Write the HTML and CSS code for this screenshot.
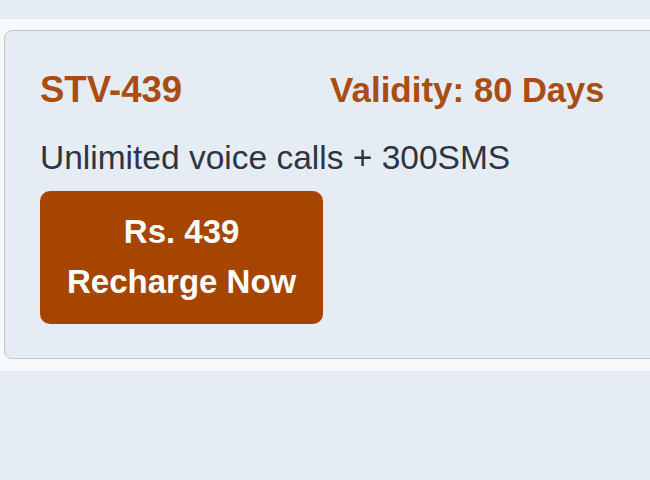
FILE: index.html
```html
<!DOCTYPE html>
<html lang="en">
<head>
  <meta charset="UTF-8">
  <title>STV Plans</title>
  <link rel="stylesheet" href="styles.css">
</head>
<body>

<div class="plan-list">
  <div class="plan-card">
    <div class="plan-head">
      <span class="plan-name">STV-439</span>
      <span class="plan-validity">Validity: <span class="days">80 Days</span></span>
    </div>
    <p class="plan-desc">Unlimited voice calls + 300SMS</p>
    <button class="recharge-btn">Rs. 439<br>Recharge Now</button>
  </div>
</div>

</body>
</html>
```

FILE: styles.css
```css
* { margin: 0; padding: 0; box-sizing: border-box; }
body {
  font-family: 'Liberation Sans', Arial, sans-serif;
  background: #e6ecf4;
  overflow: hidden;
  min-height: 100vh;
  padding-top: 19px;
}
.plan-list {
  background: #f5f9fc;
  width: 760px;
  padding: 11px 0 12px 4px;
}
.plan-card {
  background: #e6ecf4;
  border: 1px solid #c3c7cc;
  border-radius: 8px;
  padding: 38px 36px 34px 35px;
}
.plan-head {
  display: flex;
  align-items: baseline;
  gap: 148px;
  color: #aa4d12;
  font-weight: 700;
}
.plan-name { font-size: 36.5px; }
.plan-validity { font-size: 35px; }
.plan-validity .days { font-size: 34.5px; }
.plan-desc {
  margin-top: 28px;
  font-size: 33.5px;
  color: #2e3440;
}
.recharge-btn {
  margin-top: 14px;
  background: #a54500;
  color: #fff;
  border: none;
  border-radius: 10px;
  font-family: inherit;
  font-weight: 700;
  font-size: 33px;
  line-height: 50px;
  padding: 16px 27px 17px;
  text-align: center;
  cursor: pointer;
}
```
